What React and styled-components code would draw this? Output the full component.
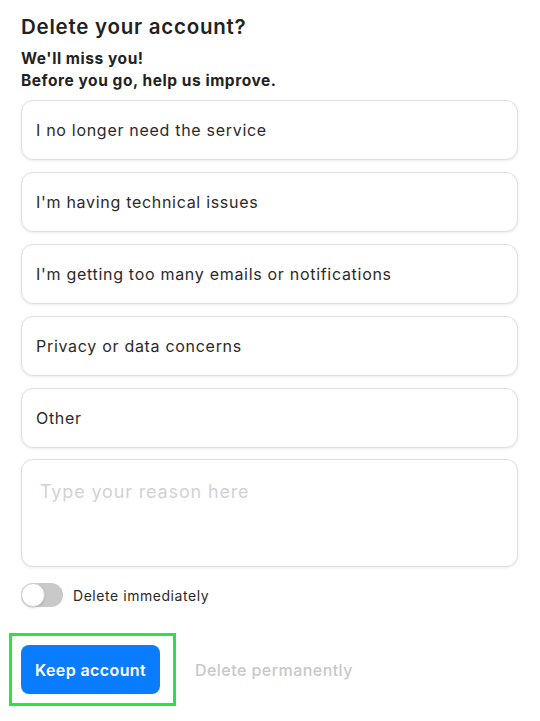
import React, { useState } from "react";
import styled, { createGlobalStyle } from "styled-components";

const Global = createGlobalStyle`
  html, body { margin: 0; padding: 0; background: #fff; }
  body { font-family: Inter, "Noto Sans", sans-serif; color: #222; }
  * { box-sizing: border-box; }
`;

const Page = styled.div`
  padding: 15px 21px 27px 21px;
  width: 540px;
`;

const Title = styled.h1`
  margin: 0;
  font-size: 20.5px;
  line-height: 24px;
  font-weight: 600;
  letter-spacing: 0.75px;
  color: #222;
`;

const Subtitle = styled.p`
  margin: 9px 0 0 0;
  font-size: 15.5px;
  line-height: 22px;
  font-weight: 700;
  letter-spacing: 0.55px;
  color: #222;
`;

const Options = styled.div`
  display: flex;
  flex-direction: column;
  gap: 12px;
  margin-top: 8px;
`;

const Option = styled.button`
  display: flex;
  align-items: center;
  width: 497px;
  height: 60px;
  padding: 0 14px;
  background: #fff;
  border: 1px solid #dedede;
  border-radius: 12px;
  box-shadow: 0 1px 3px rgba(0, 0, 0, 0.08);
  font-family: Inter, "Noto Sans", sans-serif;
  font-size: 16px;
  letter-spacing: 0.7px;
  color: #2a2a2a;
  text-align: left;
  cursor: pointer;
`;

const Reason = styled.textarea`
  display: block;
  width: 497px;
  height: 108px;
  margin-top: 11px;
  padding: 21px 18px;
  border: 1px solid #dedede;
  border-radius: 12px;
  box-shadow: 0 1px 3px rgba(0, 0, 0, 0.08);
  font-family: Inter, "Noto Sans", sans-serif;
  font-size: 18px;
  line-height: 22px;
  letter-spacing: 0.85px;
  resize: none;
  outline: none;
  &::placeholder { color: #d2d2d2; }
`;

const ToggleRow = styled.label`
  display: flex;
  align-items: center;
  gap: 10px;
  margin-top: 16px;
  font-size: 14px;
  letter-spacing: 0.55px;
  color: #2a2a2a;
  cursor: pointer;
`;

const Track = styled.span`
  position: relative;
  display: inline-block;
  width: 42px;
  height: 24px;
  border-radius: 12px;
  background: ${(p) => (p.$on ? "#0a7cff" : "#c9c9c9")};
`;

const Knob = styled.span`
  position: absolute;
  top: 0;
  left: ${(p) => (p.$on ? "18px" : "0")};
  width: 24px;
  height: 24px;
  border-radius: 50%;
  background: #fff;
  border: 1px solid #cfcfcf;
  box-shadow: 0 1px 2px rgba(0, 0, 0, 0.15);
`;

const Actions = styled.div`
  display: flex;
  align-items: center;
  gap: 35px;
  margin-top: 38px;
`;

const Highlight = styled.div`
  display: flex;
  margin: -12px -16px -12px -12px;
  padding: 9px 13px 9px 9px;
  border: 3px solid #27e445;
`;

const KeepButton = styled.button`
  height: 49px;
  width: 139px;
  padding: 0;
  border: none;
  border-radius: 8px;
  background: #0a7cff;
  color: #fff;
  font-family: Inter, "Noto Sans", sans-serif;
  font-size: 16px;
  font-weight: 600;
  letter-spacing: 0.4px;
  cursor: pointer;
`;

const DeleteLink = styled.button`
  border: none;
  background: none;
  padding: 0;
  font-family: Inter, "Noto Sans", sans-serif;
  font-size: 16px;
  font-weight: 500;
  letter-spacing: 0.45px;
  color: #c8c8c8;
  cursor: pointer;
`;

const reasons = [
  "I no longer need the service",
  "I'm having technical issues",
  "I'm getting too many emails or notifications",
  "Privacy or data concerns",
  "Other",
];

export default function App() {
  const [on, setOn] = useState(false);
  return (
    <Page>
      <Global />
      <Title>Delete your account?</Title>
      <Subtitle>
        We'll miss you!
        <br />
        Before you go, help us improve.
      </Subtitle>
      <Options>
        {reasons.map((r) => (
          <Option key={r}>{r}</Option>
        ))}
      </Options>
      <Reason placeholder="Type your reason here" />
      <ToggleRow onClick={() => setOn(!on)}>
        <Track $on={on}>
          <Knob $on={on} />
        </Track>
        Delete immediately
      </ToggleRow>
      <Actions>
        <Highlight>
          <KeepButton>Keep account</KeepButton>
        </Highlight>
        <DeleteLink>Delete permanently</DeleteLink>
      </Actions>
    </Page>
  );
}
